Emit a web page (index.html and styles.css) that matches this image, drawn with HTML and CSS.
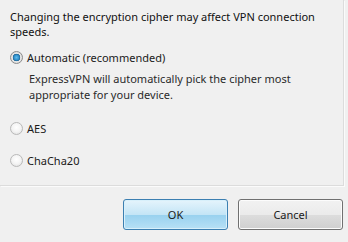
FILE: index.html
```html
<!DOCTYPE html>
<html>
<head>
<meta charset="utf-8">
<link rel="stylesheet" href="styles.css">
</head>
<body>
<div class="dialog">
  <div class="panel">
    <p class="intro">Changing the encryption cipher may affect VPN connection speeds.</p>
    <div class="option opt-auto">
      <span class="radio checked"></span>
      <span class="label">Automatic (recommended)</span>
    </div>
    <p class="desc">ExpressVPN will automatically pick the cipher most appropriate for your device.</p>
    <div class="option opt-aes">
      <span class="radio"></span>
      <span class="label">AES</span>
    </div>
    <div class="option opt-chacha">
      <span class="radio"></span>
      <span class="label">ChaCha20</span>
    </div>
  </div>
  <div class="footer">
    <button class="btn btn-ok">OK</button>
    <button class="btn btn-cancel">Cancel</button>
  </div>
</div>
</body>
</html>
```

FILE: styles.css
```css
html, body {
  margin: 0;
  padding: 0;
  background: #f0f0f0;
}
body {
  font-family: "Noto Sans", "Open Sans", sans-serif;
  font-size: 11px;
  color: #333;
}
.dialog {
  width: 348px;
  height: 242px;
  display: flex;
  flex-direction: column;
}
.panel {
  width: 333px;
  height: 176px;
  padding: 9px 0 0 10px;
  border-right: 1px solid #dcdcdc;
  border-bottom: 1px solid #dcdcdc;
  box-shadow: 1px 1px 0 #fbfbfb;
}
.intro {
  margin: 0;
  line-height: 15px;
  color: #111;
  width: 320px;
}
.option {
  display: flex;
  align-items: center;
  gap: 4px;
  height: 16px;
}
.opt-auto {
  margin-top: 10px;
}
.label {
  color: #1a1a1a;
}
.radio {
  width: 11px;
  height: 11px;
  border-radius: 50%;
  border: 1px solid #b9b9b9;
  background: radial-gradient(circle at 50% 40%, #ffffff 0%, #f4f4f4 50%, #dcdcdc 100%);
  box-sizing: content-box;
}
.radio.checked {
  border-color: #8c8c8c;
  background: radial-gradient(circle at 50% 50%, #62bbec 0%, #2a8cc8 35%, #1e5f8e 45%, #e8e8e8 52%, #cfcfcf 100%);
}
.desc {
  margin: 6px 0 0 19px;
  line-height: 16px;
  width: 290px;
  color: #2a2a2a;
}
.opt-aes {
  margin-top: 17px;
}
.opt-chacha {
  margin-top: 16px;
}
.footer {
  display: flex;
  justify-content: flex-end;
  gap: 10px;
  padding: 13px 5px 0 0;
}
.btn {
  width: 105px;
  height: 31px;
  font-family: inherit;
  font-size: 11px;
  color: #1a1a1a;
  border-radius: 3px;
  padding: 0;
}
.btn-ok {
  border: 1px solid #3c7fb1;
  background: linear-gradient(#e5f4fc 0%, #c4e5f6 50%, #98d1ef 51%, #b7e0f5 100%);
  box-shadow: inset 0 0 0 1px #d8f0fb;
}
.btn-cancel {
  border: 1px solid #707070;
  background: linear-gradient(#f2f2f2 0%, #ebebeb 50%, #dddddd 51%, #cfcfcf 100%);
  box-shadow: inset 0 0 0 1px #fcfcfc;
}
```
